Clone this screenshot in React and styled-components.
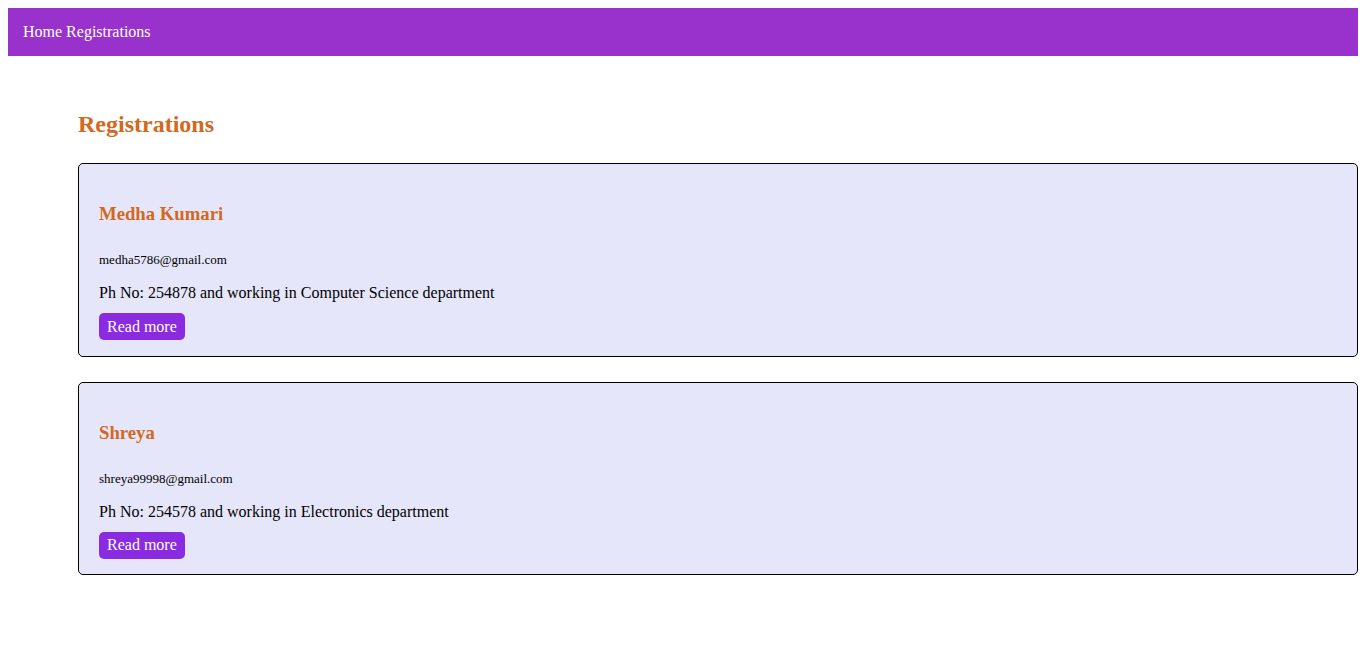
import React from "react";
import styled, { createGlobalStyle } from "styled-components";

const GlobalStyle = createGlobalStyle`
  body {
    margin: 8px;
    font-family: "Liberation Serif", "Times New Roman", serif;
    background: #ffffff;
    color: #000000;
  }
`;

const NavBar = styled.nav`
  display: flex;
  align-items: center;
  gap: 4px;
  height: 48px;
  padding: 0 15px;
  background: #9932cc;
  color: #ffffff;
  font-size: 16px;
  box-sizing: border-box;
`;

const NavLink = styled.span`
  color: #ffffff;
`;

const Main = styled.main`
  display: flex;
  flex-direction: column;
  gap: 25px;
  padding: 54px 0 40px 70px;
`;

const Title = styled.h2`
  margin: 0;
  font-size: 24px;
  line-height: 28px;
  font-weight: bold;
  color: #d2691e;
`;

const Card = styled.div`
  display: flex;
  flex-direction: column;
  align-items: flex-start;
  background: #e6e6fa;
  border: 1px solid #000000;
  border-radius: 5px;
  padding: 39px 20px 15.5px;
`;

const Name = styled.h3`
  margin: 0;
  font-size: 18.72px;
  line-height: 21px;
  font-weight: bold;
  color: #d2691e;
`;

const Email = styled.p`
  margin: 28px 0 0;
  font-size: 13px;
  line-height: 15px;
`;

const Info = styled.p`
  margin: 17px 0 0;
  font-size: 16px;
  line-height: 18px;
`;

const Button = styled.button`
  margin-top: 11px;
  height: 27px;
  padding: 0 8px;
  border: none;
  border-radius: 5px;
  background: #8a2be2;
  color: #ffffff;
  font-family: "Liberation Serif", "Times New Roman", serif;
  font-size: 16px;
  cursor: pointer;
`;

const people = [
  { name: "Medha Kumari", email: "medha5786@gmail.com", phone: "254878", dept: "Computer Science" },
  { name: "Shreya", email: "shreya99998@gmail.com", phone: "254578", dept: "Electronics" },
];

export default function App() {
  return (
    <>
      <GlobalStyle />
      <NavBar>
        <NavLink>Home</NavLink>
        <NavLink>Registrations</NavLink>
      </NavBar>
      <Main>
        <Title>Registrations</Title>
        {people.map((p) => (
          <Card key={p.email}>
            <Name>{p.name}</Name>
            <Email>{p.email}</Email>
            <Info>
              Ph No: {p.phone} and working in {p.dept} department
            </Info>
            <Button>Read more</Button>
          </Card>
        ))}
      </Main>
    </>
  );
}
